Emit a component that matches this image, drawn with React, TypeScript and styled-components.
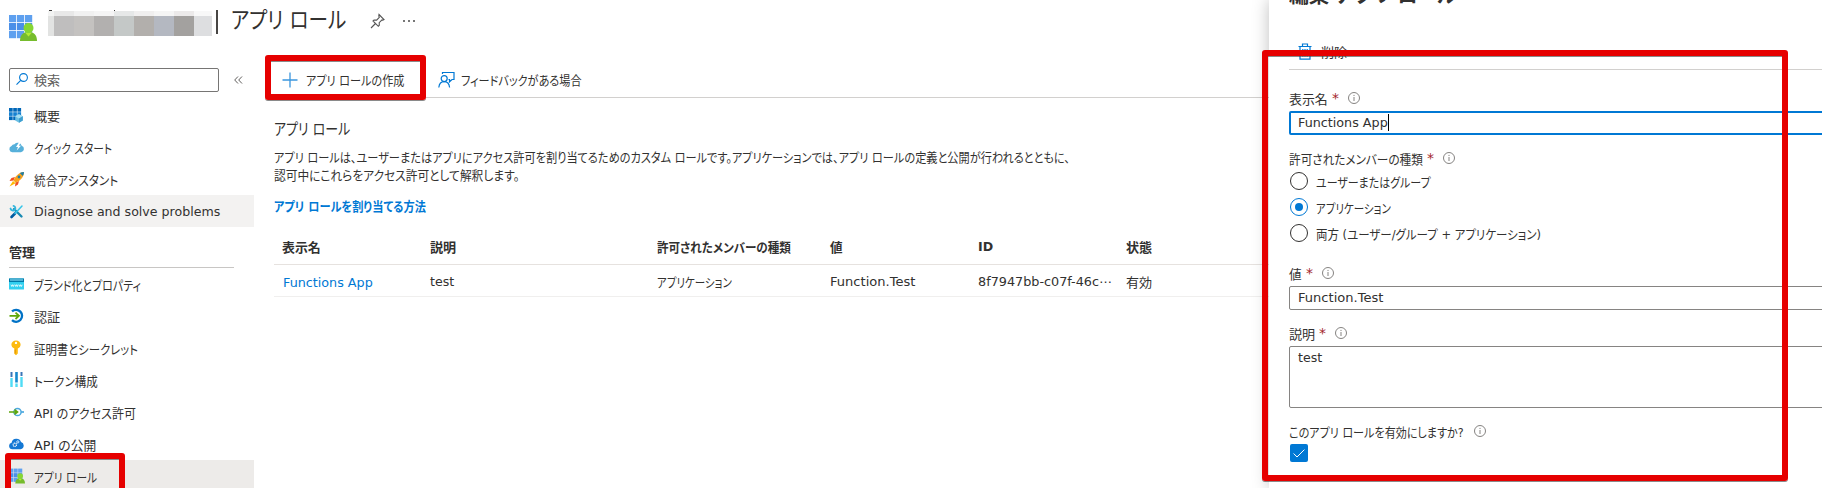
import React, { useLayoutEffect, useRef, useState } from 'react';
import styled, { createGlobalStyle } from 'styled-components';

const GlobalStyle = createGlobalStyle`
  * { box-sizing: border-box; }
  body {
    margin: 0;
    background: #fff;
    color: #323130;
    font-family: "DejaVu Sans", "Noto Sans CJK JP", sans-serif;
    font-size: 12.6px;
    font-feature-settings: "palt";
    overflow: hidden;
  }
`;

const Measure = styled.span<{ $w: number }>`
  display: inline-block;
  flex: none;
  width: ${(p) => p.$w}px;
  white-space: nowrap;
`;
const Run = styled.span`
  display: inline-block;
  transform-origin: 0 50%;
`;
function Fit({ w, children }: { w: number; children: string }) {
  const ref = useRef<HTMLSpanElement>(null);
  const [scale, setScale] = useState(1);
  useLayoutEffect(() => {
    if (ref.current) setScale(w / ref.current.offsetWidth);
  }, [w, children]);
  return (
    <Measure $w={w}>
      <Run ref={ref} style={{ transform: `scaleX(${scale})` }}>{children}</Run>
    </Measure>
  );
}

const Page = styled.div`
  position: relative;
  display: flex;
  width: 1822px;
  height: 488px;
  overflow: hidden;
`;
const Left = styled.div`
  display: flex;
  flex-direction: column;
  width: 1269px;
  flex: none;
`;
const TitleBar = styled.header`
  display: flex;
  height: 56px;
  padding-left: 9px;
  flex: none;
`;
const TitleIcon = styled.div`
  width: 39px;
  padding-top: 14px;
`;
const Mosaic = styled.div`
  display: flex;
  width: 164px;
  height: 26px;
  margin-top: 10px;
`;
const Tile = styled.span<{ $w: number; $c: string; $top: string; $speck?: number }>`
  width: ${(p) => p.$w}px;
  background:
    linear-gradient(#3b3a39, #3b3a39) ${(p) => p.$speck ?? -9}px 0 / 3px 1px no-repeat,
    linear-gradient(#fff 1px, ${(p) => p.$top} 1px 6px, ${(p) => p.$c} 6px);
`;
const Bar = styled.span`
  width: 2px;
  height: 24px;
  margin: 10px 13px 0 4px;
  background: #484644;
`;
const PageTitle = styled.h1`
  margin: 0;
  width: 139px;
  font-size: 23px;
  font-weight: 400;
  line-height: 40px;
`;
const PinWrap = styled.span`
  width: 33px;
  padding-top: 13px;
`;
const Dots = styled.span`
  display: flex;
  gap: 3px;
  padding-top: 20px;
  i { width: 2px; height: 2px; background: #777; }
`;
const Body = styled.div`
  display: flex;
  flex: 1;
`;
const Sidebar = styled.nav`
  width: 254px;
  flex: none;
`;
const SearchRow = styled.div`
  display: flex;
  align-items: center;
  height: 24px;
  margin: 12px 0 7px 9px;
`;
const SearchBox = styled.div`
  display: flex;
  align-items: center;
  width: 210px;
  height: 24px;
  margin-right: 15px;
  padding: 0 0 1px 6px;
  gap: 6px;
  border: 1px solid #767574;
  border-radius: 2px;
  color: #605e5c;
`;
const NavItem = styled.div<{ $bg?: string; $drop?: number }>`
  display: flex;
  align-items: center;
  gap: 9px;
  height: 32px;
  padding: ${(p) => p.$drop ?? 0}px 0 0 9px;
  background: ${(p) => p.$bg ?? 'transparent'};
  svg { flex: none; }
`;
const NavGroup = styled.div`
  display: flex;
  align-items: center;
  width: 225px;
  height: 33px;
  margin: 8px 0 0 9px;
  border-bottom: 1px solid #c8c6c4;
  font-weight: 700;
`;
const Main = styled.main`
  flex: 1;
  padding-left: 11px;
`;
const Toolbar = styled.div`
  display: flex;
  align-items: center;
  height: 42px;
  padding: 6px 0 0 17px;
  border-bottom: 1px solid #d2d0ce;
`;
const ToolLabel = styled.span<{ $l: number; $r?: number }>`
  display: flex;
  margin-left: ${(p) => p.$l}px;
  margin-right: ${(p) => p.$r ?? 0}px;
`;
const Content = styled.section`
  padding-left: 9px;
`;
const SectionTitle = styled.h2`
  margin: 21px 0 8px;
  font-size: 15.5px;
  font-weight: 400;
  line-height: 22px;
`;
const Line = styled.div`
  height: 18px;
  line-height: 18px;
`;
const DocLink = styled.a`
  display: block;
  height: 20px;
  margin-top: 12px;
  color: #0078d4;
  font-weight: 700;
  line-height: 20px;
`;
const TableRow = styled.div<{ $head?: boolean }>`
  display: grid;
  grid-template-columns: 148px 227px 173px 148px 148px auto;
  align-items: center;
  height: ${(p) => (p.$head ? 36 : 32)}px;
  margin-top: ${(p) => (p.$head ? 12 : 0)}px;
  padding: ${(p) => (p.$head ? '0 0 1px 8px' : '1px 0 0 8px')};
  border-bottom: 1px solid ${(p) => (p.$head ? '#e6e2df' : '#f0efee')};
  font-weight: ${(p) => (p.$head ? 700 : 400)};
`;
const RoleLink = styled.a`
  padding: 2px 0 0 1px;
  color: #0078d4;
`;
const Panel = styled.aside`
  flex: 1;
  padding-left: 20px;
  background: #fff;
  box-shadow: 0 0 16px rgba(0, 0, 0, 0.26);
  clip-path: inset(0 0 0 -30px);
`;
const PanelTitle = styled.h2`
  height: 35px;
  margin: -17px 0 0;
  font-size: 23px;
  font-weight: 700;
  line-height: 22px;
`;
const PanelTools = styled.div`
  display: flex;
  align-items: center;
  gap: 9px;
  height: 52px;
  padding: 16px 0 0 9px;
  border-bottom: 1px solid #d2d0ce;
`;
const FieldLabel = styled.div<{ $top: number }>`
  display: flex;
  align-items: center;
  height: 20px;
  margin-top: ${(p) => p.$top}px;
`;
const Star = styled.span`
  width: 16px;
  margin-left: 4px;
  color: #a4262c;
  font-size: 14px;
`;
const LabelGap = styled.span`
  width: 10px;
`;
const TextInput = styled.div<{ $focus?: boolean; $h?: number }>`
  width: 560px;
  height: ${(p) => p.$h ?? 24}px;
  padding-left: ${(p) => (p.$focus ? 7 : 8)}px;
  margin-top: 3px;
  border: ${(p) => (p.$focus ? '2px solid #0078d4' : '1px solid #868482')};
  border-radius: 2px;
  line-height: ${(p) => (p.$focus ? 20 : 22)}px;
  display: flex;
`;
const Caret = styled.span`
  width: 1px;
  height: 17px;
  margin-top: 1px;
  background: #000;
`;
const RadioRow = styled.div`
  display: flex;
  align-items: center;
  gap: 8px;
  height: 26px;
  padding-left: 1px;
`;
const Radio = styled.span<{ $on?: boolean }>`
  display: grid;
  place-items: center;
  width: 18px;
  height: 18px;
  border: 1px solid ${(p) => (p.$on ? '#0078d4' : '#323130')};
  border-radius: 50%;
  &::after {
    content: "";
    width: 8px;
    height: 8px;
    border-radius: 50%;
    background: ${(p) => (p.$on ? '#0078d4' : 'transparent')};
  }
`;
const CheckBox = styled.span`
  display: grid;
  place-items: center;
  width: 18px;
  height: 18px;
  margin: 3px 0 0 1px;
  border-radius: 2px;
  background: #0078d4;
`;
const Highlight = styled.div<{ $x: number; $y: number; $w: number; $h: number }>`
  position: absolute;
  left: ${(p) => p.$x}px;
  top: ${(p) => p.$y}px;
  width: ${(p) => p.$w}px;
  height: ${(p) => p.$h}px;
  border: 6px solid #e60000;
  border-radius: 3px;
  box-shadow: 0 1px 0 rgba(60, 60, 60, 0.6), inset 0 1px 0 rgba(60, 60, 60, 0.6);
`;

const AppRolesIcon = ({ size }: { size: number }) => (
  <svg width={size} height={size} viewBox="0 0 28 28">
    {[0, 1, 2].map((r) => [0, 1, 2].map((c) => (
      <rect key={`${r}${c}`} x={c * 8} y={1 + r * 8} width="7.2" height="7.2" fill={r === 1 ? '#4a8fe8' : '#5ea0ef'} />
    )))}
    <path d="M11 27c0-6 3-9 8.500-9s8.500 3 8.500 9z" fill="#76bc2d" />
    <path d="M16 18.500l3.500 4 3.500-4z" fill="#b4ec36" />
    <circle cx="19.500" cy="14" r="5" fill="#86d633" />
  </svg>
);
const Pin = () => (
  <svg width="15" height="16" viewBox="0 0 15 16" fill="none" stroke="#555" strokeWidth="1.100">
    <path d="M9 1.500l5 5-1.200.6-.8-.2-2.800 2.800.1 2.600-1 1L3 8l1-1 2.600.1 2.700-2.800-.5-1.400zM5.500 10.500L1 15" />
  </svg>
);
const SearchIcon = () => (
  <svg width="12" height="13" viewBox="0 0 12 13" fill="none" stroke="#0078d4" strokeWidth="1.100">
    <circle cx="7.500" cy="4.500" r="3.900" /><path d="M4.700 7.300L.5 11.700" />
  </svg>
);
const Collapse = () => (
  <svg width="9" height="8" viewBox="0 0 9 8" fill="none" stroke="#605e5c"><path d="M4 .5L.7 4 4 7.500M8 .5L4.700 4 8 7.500" /></svg>
);
const Overview = () => (
  <svg width="16" height="16" viewBox="0 0 16 16">
    {[0, 1, 2].map((r) => [0, 1, 2].map((c) => (
      <rect key={`${r}${c}`} x={c * 4.200} y={1 + r * 4.200} width="3.700" height="3.700" fill={r === 1 ? '#1580d0' : '#0067b8'} />
    )))}
    <path d="M10 7.200l3.800 2v4.300L10 15.700l-3.800-2.200V9.200z" fill="#6bbfe3" />
    <path d="M10 7.200l3.800 2-3.800 2.200-3.800-2.200z" fill="#a7def3" />
    <path d="M10 11.400l3.800-2.200v4.300L10 15.700z" fill="#3f9fd0" />
  </svg>
);
const QuickStart = () => (
  <svg width="16" height="16" viewBox="0 0 16 16">
    <path d="M3.300 13.200A3.200 3.200 0 0 1 2.500 7 3.200 3.200 0 0 1 5.500 5.200 4.200 4.200 0 0 1 12.700 6.800 3.300 3.300 0 0 1 12 13.200z" fill="#56b0da" />
    <path d="M10.200 3L7 8h2l-1.300 3.500L12 6.800H9.900L12 3z" fill="#fff" />
  </svg>
);
const Rocket = () => (
  <svg width="16" height="16" viewBox="0 0 16 16">
    <path d="M6 6L2.500 7 .5 10l4-.5zM10 10l-1 3.500-3 2 .5-4z" fill="#f04e23" />
    <path d="M4 10l2.500 2.200L.5 15.500z" fill="#ffb900" />
    <path d="M15 1c-4 0-8 3-10.500 8.500l2 2.200C12 9.500 15 5.500 15 1z" fill="#faa21b" />
    <path d="M15 1c-1.500 0-3 .4-4.200 1.100l3 3C14.600 3.800 15 2.500 15 1z" fill="#1d7fa8" />
    <circle cx="10" cy="6" r="1.400" fill="#1d7fa8" />
  </svg>
);
const Tools = () => (
  <svg width="16" height="16" viewBox="0 0 16 16" fill="none" strokeLinecap="round">
    <path d="M5 5l7.500 7.500" stroke="#198ab3" strokeWidth="2.400" />
    <path d="M1.500 4.500c.5 2 3 2.800 4.300 1.300S6 2 4.500 1.800" stroke="#32b5dc" strokeWidth="1.800" />
    <path d="M2.500 13l3.500-3.500" stroke="#005ba1" strokeWidth="2.600" />
    <path d="M6 9.500l7-7.500" stroke="#32c5e9" strokeWidth="1.500" />
  </svg>
);
const Branding = () => (
  <svg width="16" height="16" viewBox="0 0 16 16">
    <rect y="2.500" width="15" height="11" rx=".6" fill="#32d0f0" />
    <rect y="2.500" width="15" height="3.500" fill="#0078a8" />
    <rect x="1" y="3.500" width="13" height="1" fill="#9cebff" />
    <path d="M2 8.700l.8 1.800.8-1.800.8 1.800.8-1.800M6 8.700l.8 1.800.8-1.800.8 1.800.7-1.800M10 8.700l.8 1.800.8-1.800.8 1.800.8-1.800" fill="none" stroke="#fff" strokeWidth=".8" />
  </svg>
);
const AuthIcon = () => (
  <svg width="16" height="16" viewBox="0 0 16 16" fill="none">
    <path d="M3 3.400A6 6 0 1 1 3 12.200" stroke="#0072c6" strokeWidth="2.300" />
    <path d="M.5 7.800h9M6.500 4.600L10 7.800l-3.500 3.200" stroke="#5ea70b" strokeWidth="1.700" />
  </svg>
);
const KeyIcon = () => (
  <svg width="16" height="16" viewBox="0 0 16 16">
    <path d="M7 .5c2.600 0 4.600 1.700 4.600 4.100A4 4 0 0 1 8.800 8.400V13.600L7 15.200 5.300 13.800V8.400A4 4 0 0 1 2.400 4.600C2.400 2.200 4.400.5 7 .5z" fill="#fdbb11" />
    <circle cx="7" cy="2.900" r="1.200" fill="#fff" /><path d="M6.200 9.500v4" stroke="#e08a00" strokeWidth=".9" />
  </svg>
);
const TokenIcon = () => (
  <svg width="16" height="16" viewBox="0 0 16 16">
    <path d="M2.500 0v5M12.500 0v4" stroke="#3a76b8" strokeWidth="2" /><path d="M7.500 0v10.500" stroke="#1688cd" strokeWidth="2.600" />
    <path d="M2.500 6v9M12.500 5v10" stroke="#50dcf5" strokeWidth="2.400" /><path d="M7.500 11.500V15" stroke="#50dcf5" strokeWidth="2.400" />
  </svg>
);
const ApiPerm = () => (
  <svg width="16" height="16" viewBox="0 0 16 16" fill="none">
    <circle cx="8.500" cy="8" r="3.600" stroke="#4da9df" strokeWidth="1.500" />
    <path d="M12 8h3" stroke="#4da9df" strokeWidth="1.700" />
    <path d="M0 8h8M5.500 5.700L8.500 8l-3 2.300" stroke="#5ea70b" strokeWidth="1.600" />
  </svg>
);
const ApiExpose = () => (
  <svg width="16" height="16" viewBox="0 0 16 16">
    <path d="M3.300 13.200A3.300 3.300 0 0 1 2.600 6.700 4.900 4.900 0 0 1 12 6 3.700 3.700 0 0 1 11.700 13.200z" fill="#1478d4" />
    <circle cx="5.800" cy="8.800" r="1.700" fill="none" stroke="#fff" strokeWidth="1.200" strokeDasharray="1.100 .5" />
    <circle cx="8.800" cy="5.900" r="1.100" fill="none" stroke="#d0e8ff" />
  </svg>
);
const Plus = () => (
  <svg width="16" height="16" viewBox="0 0 16 16"><path d="M8 .5v15M.5 8h15" stroke="#3b96de" strokeWidth="1.300" /></svg>
);
const Feedback = () => (
  <svg width="17" height="17" viewBox="0 0 17 17" fill="none" stroke="#0078d4" strokeWidth="1.200">
    <path d="M4.500 3V1.500h11.500v7h-2l-2.500 2.300V8.500h-1" /><circle cx="6.200" cy="7.600" r="3" /><path d="M.8 16.500c.4-3.600 2.400-5.800 5.400-5.800s5 2.200 5.400 5.800" />
  </svg>
);
const Trash = () => (
  <svg width="14" height="17" viewBox="0 0 14 17" fill="none" stroke="#0078d4" strokeWidth="1.200">
    <path d="M.5 3.500h13M4.500 3.300V1h5v2.300M2 3.500v12.700h10V3.500M4.800 6v7.500M7 6v7.500M9.200 6v7.500" />
  </svg>
);
const Info = () => (
  <svg width="12" height="12" viewBox="0 0 12 12" fill="none" stroke="#858381">
    <circle cx="6" cy="6" r="5.500" /><path d="M6 5v4M6 2.900v1.100" />
  </svg>
);
const Check = () => (
  <svg width="12" height="9" viewBox="0 0 12 9" fill="none" stroke="#fff"><path d="M.6 4.500L4 8l7.400-7.400" /></svg>
);

const tiles: [number, string, string, number?][] = [
  [6, '#e2e3e2', '#f2f3f2', 1], [20, '#bfbebe', '#e8e8e8'], [20, '#c4c2c0', '#f1f1f1'], [20, '#b2b0af', '#f5f5f5'],
  [20, '#c4c8c7', '#e6e8e8', -2], [20, '#b2afac', '#f0efef'], [20, '#b4b8c1', '#f5f5f5'], [20, '#a3a19f', '#eceaea'],
  [18, '#dddee0', '#f8f8f8'],
];
const topNav = [
  { icon: <Overview />, text: '概要', w: 26 },
  { icon: <QuickStart />, text: 'クイック スタート', w: 78 },
  { icon: <Rocket />, text: '統合アシスタント', w: 84 },
  { icon: <Tools />, text: 'Diagnose and solve problems', w: 186, bg: '#f3f2f1', drop: 1 },
];
const manageNav = [
  { icon: <Branding />, text: 'ブランド化とプロパティ', w: 107 },
  { icon: <AuthIcon />, text: '認証', w: 26 },
  { icon: <KeyIcon />, text: '証明書とシークレット', w: 104 },
  { icon: <TokenIcon />, text: 'トークン構成', w: 64 },
  { icon: <ApiPerm />, text: 'API のアクセス許可', w: 102 },
  { icon: <ApiExpose />, text: 'API の公開', w: 62 },
  { icon: <AppRolesIcon size={16} />, text: 'アプリ ロール', w: 63, bg: '#edebe9' },
];

function Label({ text, w, top, required = true }: { text: string; w: number; top: number; required?: boolean }) {
  return (
    <FieldLabel $top={top}>
      <Fit w={w}>{text}</Fit>
      {required ? <Star>*</Star> : <LabelGap />}
      <Info />
    </FieldLabel>
  );
}

export default function App() {
  return (
    <Page>
      <GlobalStyle />
      <Left>
        <TitleBar>
          <TitleIcon><AppRolesIcon size={28} /></TitleIcon>
          <Mosaic>{tiles.map(([w, c, top, speck], i) => <Tile key={i} $w={w} $c={c} $top={top} $speck={speck} />)}</Mosaic>
          <Bar />
          <PageTitle><Fit w={115}>アプリ ロール</Fit></PageTitle>
          <PinWrap><Pin /></PinWrap>
          <Dots><i /><i /><i /></Dots>
        </TitleBar>
        <Body>
          <Sidebar>
            <SearchRow>
              <SearchBox><SearchIcon /><Fit w={26}>検索</Fit></SearchBox>
              <Collapse />
            </SearchRow>
            {topNav.map((n) => <NavItem key={n.text} $bg={n.bg} $drop={n.drop}>{n.icon}<Fit w={n.w}>{n.text}</Fit></NavItem>)}
            <NavGroup><Fit w={26}>管理</Fit></NavGroup>
            {manageNav.map((n) => <NavItem key={n.text} $bg={n.bg}>{n.icon}<Fit w={n.w}>{n.text}</Fit></NavItem>)}
          </Sidebar>
          <Main>
            <Toolbar>
              <Plus />
              <ToolLabel $l={8} $r={34}><Fit w={98}>アプリ ロールの作成</Fit></ToolLabel>
              <Feedback />
              <ToolLabel $l={6}><Fit w={121}>フィードバックがある場合</Fit></ToolLabel>
            </Toolbar>
            <Content>
              <SectionTitle><Fit w={76}>アプリ ロール</Fit></SectionTitle>
              <Line><Fit w={796}>アプリ ロールは、ユーザーまたはアプリにアクセス許可を割り当てるためのカスタム ロールです。アプリケーションでは、アプリ ロールの定義と公開が行われるとともに、</Fit></Line>
              <Line><Fit w={245}>認可中にこれらをアクセス許可として解釈します。</Fit></Line>
              <DocLink><Fit w={152}>アプリ ロールを割り当てる方法</Fit></DocLink>
              <TableRow $head>
                <Fit w={39}>表示名</Fit><Fit w={26}>説明</Fit><Fit w={134}>許可されたメンバーの種類</Fit>
                <Fit w={13}>値</Fit><Fit w={15}>ID</Fit><Fit w={26}>状態</Fit>
              </TableRow>
              <TableRow>
                <RoleLink><Fit w={90}>Functions App</Fit></RoleLink><Fit w={24}>test</Fit><Fit w={75}>アプリケーション</Fit>
                <Fit w={85}>Function.Test</Fit><Fit w={134}>8f7947bb-c07f-46c⋯</Fit><Fit w={26}>有効</Fit>
              </TableRow>
            </Content>
          </Main>
        </Body>
      </Left>
      <Panel>
        <PanelTitle><Fit w={168}>編集 アプリ ロール</Fit></PanelTitle>
        <PanelTools><Trash /><Fit w={26}>削除</Fit></PanelTools>
        <Label text="表示名" w={39} top={18} />
        <TextInput $focus><Fit w={90}>Functions App</Fit><Caret /></TextInput>
        <Label text="許可されたメンバーの種類" w={134} top={13} />
        <RadioRow><Radio /><Fit w={115}>ユーザーまたはグループ</Fit></RadioRow>
        <RadioRow><Radio $on /><Fit w={75}>アプリケーション</Fit></RadioRow>
        <RadioRow><Radio /><Fit w={225}>両方 (ユーザー/グループ + アプリケーション)</Fit></RadioRow>
        <Label text="値" w={13} top={17} />
        <TextInput><Fit w={85}>Function.Test</Fit></TextInput>
        <Label text="説明" w={26} top={13} />
        <TextInput $h={62}><Fit w={24}>test</Fit></TextInput>
        <Label text="このアプリ ロールを有効にしますか?" w={175} top={13} required={false} />
        <CheckBox><Check /></CheckBox>
      </Panel>
      <Highlight $x={265} $y={55} $w={161} $h={45} />
      <Highlight $x={5} $y={453} $w={120} $h={41} />
      <Highlight $x={1262} $y={50} $w={526} $h={431} />
    </Page>
  );
}
